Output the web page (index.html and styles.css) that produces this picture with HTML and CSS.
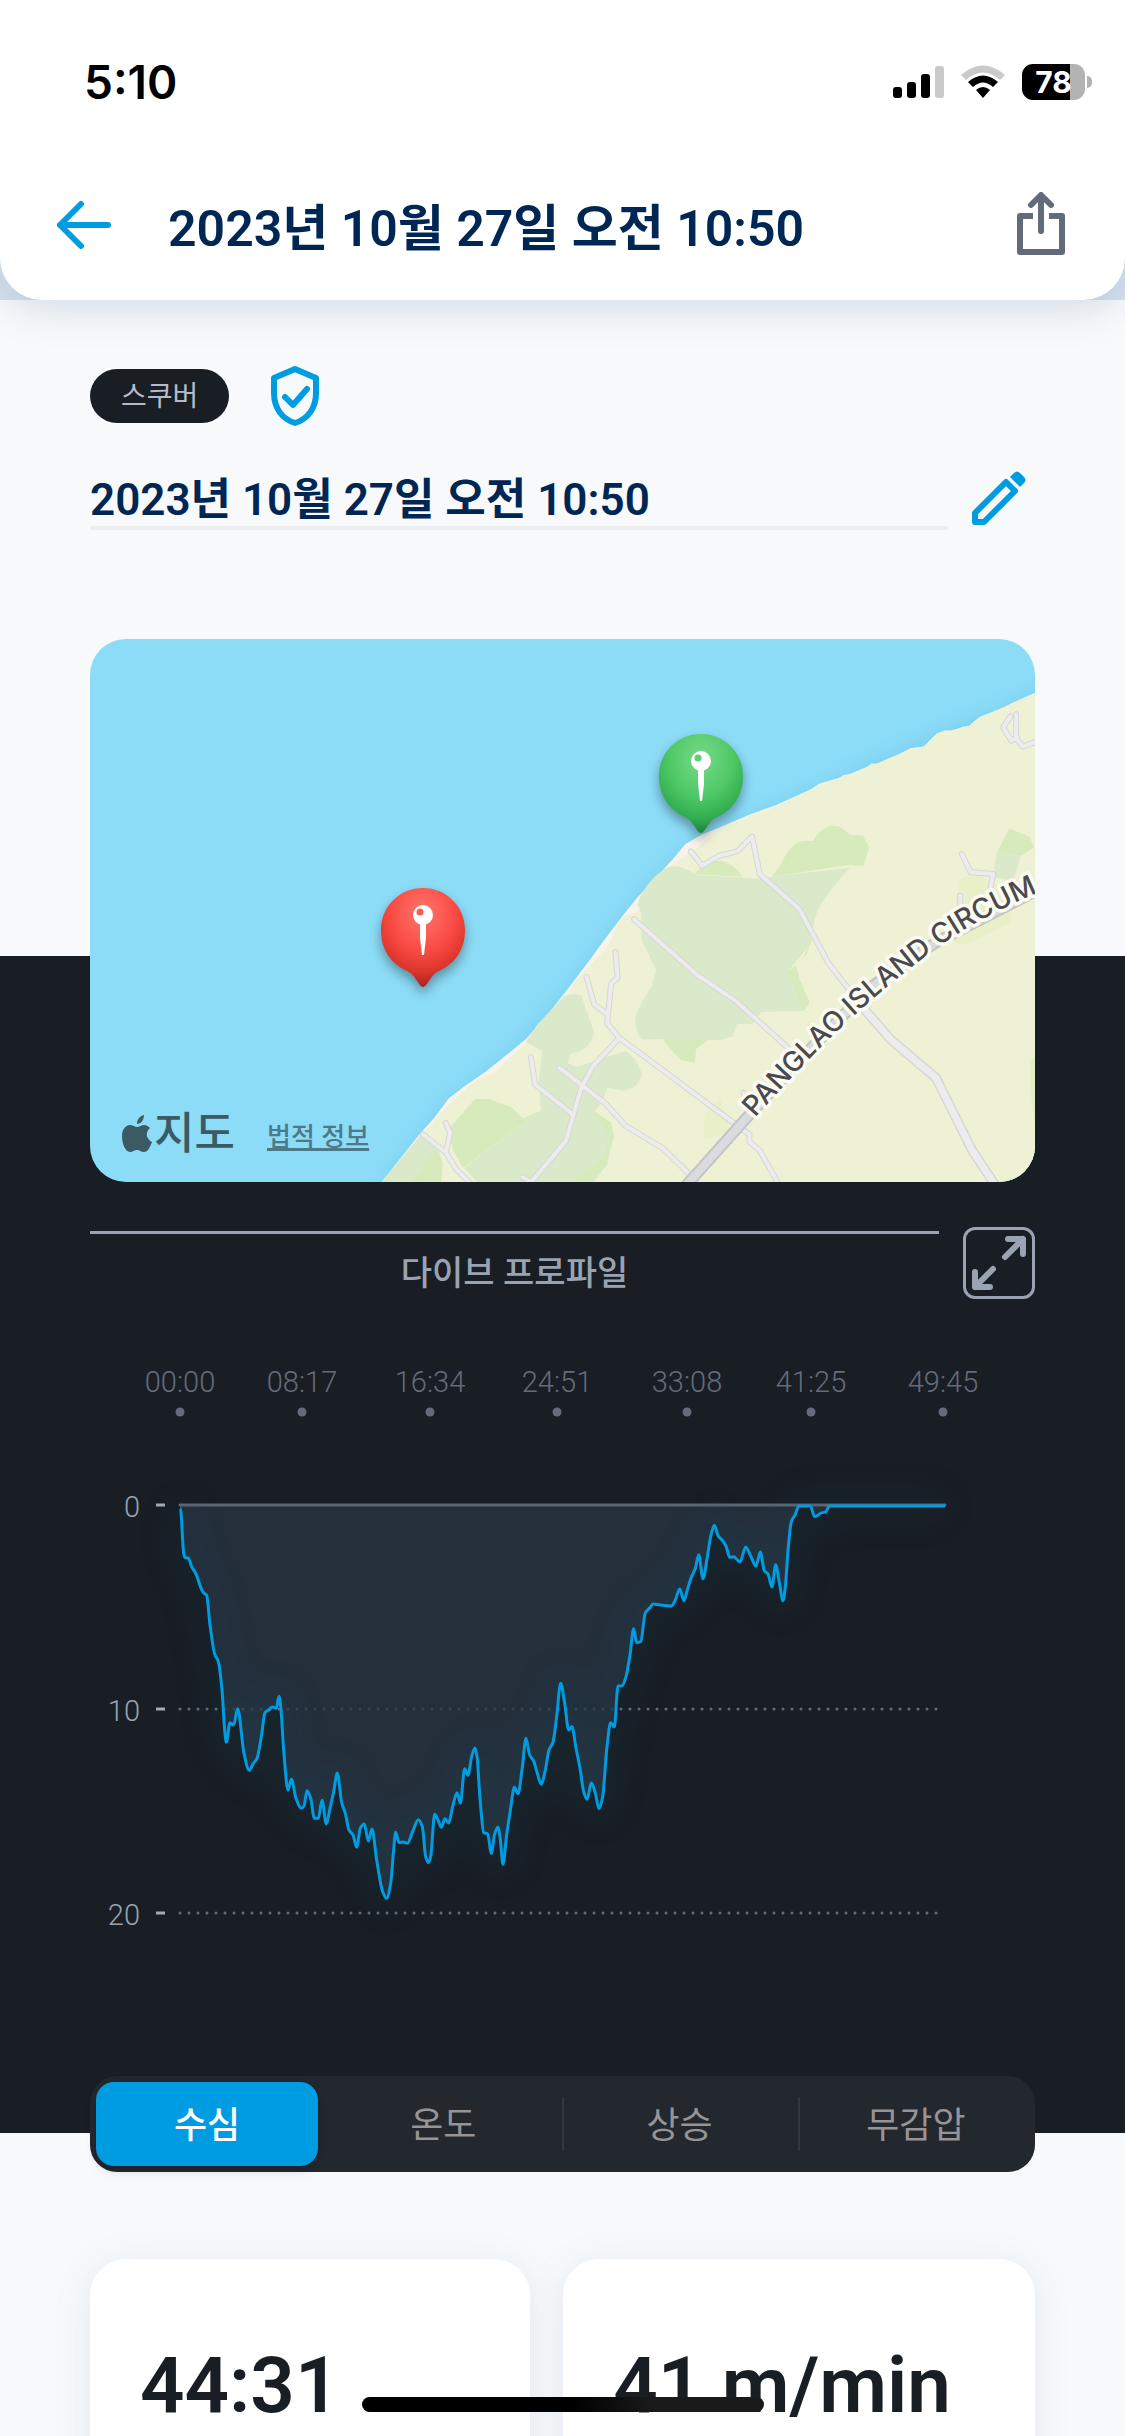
FILE: index.html
```html
<!DOCTYPE html>
<html lang="ko">
<head>
    <meta charset="utf-8">
    <meta name="viewport" content="width=device-width, initial-scale=1">
    <title>다이브 로그</title>
    <link rel="stylesheet" href="styles.css">
</head>
<body>
    <div class="top">
        <header class="header">
            <div class="status-bar">
                <span class="clock">5:10</span>
                <div class="status-icons">
                    <svg width="51" height="34" viewBox="0 0 51 34">
                        <rect x="0" y="22" width="9" height="11" rx="3"/>
                        <rect x="14" y="17" width="9" height="16" rx="3"/>
                        <rect x="28" y="9" width="9" height="24" rx="3"/>
                        <rect x="42" y="1" width="9" height="32" rx="3" fill="#cacaca"/>
                    </svg>
                    <svg width="46" height="34" viewBox="0 0 46 34">
                        <path d="M1 10Q23 -9 45 10L40 15Q23 0 6 15Z" fill="#cacaca"/>
                        <path d="M8 17Q23 4 38 17L33 22Q23 13 13 22Z"/>
                        <path d="M16 25Q23 19 30 25L23 33Z"/>
                    </svg>
                    <div class="battery"><span>78</span></div>
                </div>
            </div>
            <div class="app-bar">
                <button class="icon-btn" aria-label="뒤로">
                    <svg width="54" height="54" viewBox="0 0 54 54" fill="none" stroke="#009ce1" stroke-width="6" stroke-linecap="round" stroke-linejoin="round">
                        <path d="M51 27H3M24 6L3 27l21 21"/>
                    </svg>
                </button>
                <h1>2023년 10월 27일 오전 10:50</h1>
                <button class="icon-btn" aria-label="공유">
                    <svg width="48" height="66" viewBox="0 0 48 66" fill="none" stroke="#616b7a" stroke-width="6" stroke-linejoin="round">
                        <path d="M16 24H3v36h42V24H32"/>
                        <path d="M24 39V6M14 13L24 3l10 10" stroke-linecap="round"/>
                    </svg>
                </button>
            </div>
        </header>
    </div>

    <main>
        <section class="summary">
            <div class="tags">
                <span class="pill">스쿠버</span>
                <svg width="48" height="60" viewBox="0 0 48 60" fill="none" stroke="#009ce1" stroke-width="6" stroke-linejoin="round">
                    <path d="M24 3L45 12V27C45 42 37 53 24 57C11 53 3 42 3 27V12Z"/>
                    <path d="M14 31l8 8 14-16" stroke-linecap="round"/>
                </svg>
            </div>
            <div class="name-row">
                <input class="name-input" type="text" value="2023년 10월 27일 오전 10:50" aria-label="다이브 이름">
                <button class="icon-btn" aria-label="이름 편집">
                    <svg width="54" height="54" viewBox="0 0 54 54">
                        <path d="M3 51V42L34 11L43 20L12 51Z" fill="none" stroke="#009ce1" stroke-width="6" stroke-linejoin="round"/>
                        <path d="M38 6L42 2Q45 -1 48 2L52 6Q55 9 52 12L48 16Z" fill="#009ce1"/>
                    </svg>
                </button>
            </div>

            <div class="map">
                <svg class="map-art" viewBox="0 0 945 543" role="img" aria-label="다이브 위치 지도">
                    <defs>
                        <radialGradient id="green" cx="50%" cy="25%" r="75%">
                            <stop offset="0" stop-color="#78d989"/>
                            <stop offset=".5" stop-color="#4fc966"/>
                            <stop offset=".8" stop-color="#33ae50"/>
                            <stop offset="1" stop-color="#20823a"/>
                        </radialGradient>
                        <radialGradient id="red" cx="50%" cy="25%" r="75%">
                            <stop offset="0" stop-color="#ff756c"/>
                            <stop offset=".5" stop-color="#fa4c45"/>
                            <stop offset=".8" stop-color="#dc352c"/>
                            <stop offset="1" stop-color="#a32620"/>
                        </radialGradient>
                        <filter id="soft" x="-50%" y="-50%" width="200%" height="200%">
                            <feGaussianBlur stdDeviation="6"/>
                        </filter>
                        <filter id="coast" x="-20%" y="-20%" width="140%" height="140%">
                            <feGaussianBlur stdDeviation="22"/>
                        </filter>
                        <path id="road-label" d="M665 479Q715 422 756 384T844 311Q898 271 990 237"/>
                        <path id="marker" d="M0 -42C24 -42 42 -23 42 0C42 22 30 35 14 42C7 46 4 57 0 57S-7 46 -14 42C-30 35 -42 22 -42 0C-42 -23 -24 -42 0 -42Z"/>
                    </defs>
                    <rect width="945" height="543" fill="#8cdcf8"/>
                    <g transform="translate(270 1) scale(.43367 .35714)">
                        <path d="M1600 120L1500 178L1330 262L1100 385L900 490L750 572L610 760L490 960L345 1155L205 1285L50 1518L1600 1600Z" fill="#62bfe0" opacity=".4" filter="url(#coast)"/>
                        <path d="M1560 146L1505 176L1482 190L1430 215L1405 240L1365 253L1330 262L1300 298L1270 303L1235 324L1195 345L1160 360L1130 375L1100 388L1060 402L1040 418L960 462L900 488L820 530L786 546L750 572L720 615L665 688L640 720L610 765L560 845L530 895L490 960L435 1045L382 1118L345 1155L290 1208L240 1250L205 1283L170 1340L140 1380L95 1448L50 1518H1580V146Z" fill="#f7f3ea"/>
                        <path d="M1560 147L1505 177L1482 190L1457 203L1430 216L1418 226L1405 241L1390 243L1365 254L1350 253L1330 262L1316 282L1300 299L1285 301L1270 303L1255 315L1235 324L1215 333L1195 346L1180 346L1160 362L1145 372L1115 378L1100 390L1085 394L1050 414L960 466L900 492L820 536L775 585L740 612L690 660L640 760L605 775L570 860L500 950L470 1010L382 1128L315 1208L265 1236L205 1300L150 1375L50 1518H1580V147Z" fill="#eef1d4"/>
                        <path d="M950 663L972 625C985 590 1000 567 1025 563L1045 563C1060 530 1080 515 1105 522L1130 545L1160 548L1174 580L1161 632L1125 630Z" fill="#d6eabb"/>
                        <path d="M770 655L800 622Q850 605 882 663Z" fill="#d6eabb"/>
                        <path d="M640 740C650 700 680 650 715 634Q745 630 775 658L910 668L1130 638Q1050 740 1046 800L1040 850L985 930L1025 1038L925 1042L905 1075L870 1075L860 1110L830 1120L700 1118L650 1118C635 1100 630 1060 640 1040C655 1000 670 980 675 960L683 925L650 840L648 765Z" fill="#dae9ca"/>
                        <path d="M1042 835L1020 895L985 930L1000 970L1022 1038Q1040 1020 1034 1005L1015 955L1005 912L1030 880Z" fill="#d6eabb"/>
                        <path d="M705 1130L700 1118H805L775 1145L772 1185L740 1175Z" fill="#d6eabb"/>
                        <path d="M382 1125L410 1075L470 998Q490 988 510 995L540 1100Q530 1140 510 1150L485 1160L478 1185L500 1195L610 1152Q635 1160 650 1215Q640 1260 605 1262L570 1252L560 1290L540 1320L570 1360L585 1390L570 1465L540 1518H270L240 1478L395 1335L417 1318L412 1240L420 1150Z" fill="#dae9ca"/>
                        <path d="M205 1370L265 1285H297L350 1308L375 1340L417 1318L395 1335L238 1478L215 1430Z" fill="#d6eabb"/>
                        <path d="M540 1320L578 1350L586 1390L570 1440V1470L530 1518H490L560 1450L578 1395Z" fill="#d6eabb"/>
                        <path d="M50 1518L140 1385L182 1430L190 1465L185 1518Z" fill="#dae9ca"/>
                        <path d="M120 1518L175 1425L191 1465L187 1518Z" fill="#d6eabb"/>
                        <path d="M1468 595L1498 528L1543 550L1554 580L1524 604Z" fill="#d6eabb"/>
                        <path d="M1468 595L1524 604L1506 675L1460 665Z" fill="#dae9ca"/>
                        <path d="M1375 720L1385 670Q1420 640 1450 675L1500 700V790L1400 850Q1350 860 1370 800Z" fill="#e9f0c8"/>
                        <path d="M790 1370L800 1320L830 1285L850 1345L850 1380L800 1395Z" fill="#e9f0c8"/>
                        <path d="M1545 1180L1560 1160V1400L1545 1250Z" fill="#e4edc6"/>
                        <g fill="none" stroke-linejoin="round" stroke-linecap="round">
                            <g class="road-edge">
                                <path id="lanes" d="M763 592L789 632L828 604L870 592L904 550L922 656L1013 753L1080 905L1135 990M632 782L778 938L868 1012L990 1145M589 874L594 945L579 963L570 1073L598 1114L868 1358L898 1384V1405L922 1430L963 1518M522 943L540 1020L570 1048M598 1114L537 1194L510 1255L492 1330L475 1402L395 1518M460 1198L510 1245L566 1298L612 1360L698 1423L765 1502M394 1168L404 1245L492 1330M375 1504L395 1518M145 1384L198 1435L222 1482L252 1518M198 1353L208 1380L198 1435M1388 600L1408 650L1460 655L1450 720M1384 716V770M1513 208V275L1528 298L1558 286M1500 214L1483 245L1502 282L1515 272M884 1268L895 1300"/>
                            </g>
                            <use href="#lanes" class="road"/>
                            <path class="road-edge wide" d="M1135 990L1160 1030L1225 1120L1328 1226L1412 1430L1464 1525"/>
                            <path class="road wide" d="M1135 990L1160 1030L1225 1120L1328 1226L1412 1430L1464 1525"/>
                            <path class="highway-edge" d="M750 1530L890 1340L1050 1130L1180 970L1330 845L1580 690"/>
                            <path class="highway" d="M750 1530L890 1340L1050 1130L1180 970L1330 845L1580 690"/>
                        </g>
                    </g>
                    <text class="road-name"><textPath href="#road-label">PANGLAO ISLAND CIRCUM</textPath></text>
                    <g transform="translate(611 137)">
                        <use href="#marker" y="6" opacity=".35" filter="url(#soft)"/>
                        <use href="#marker" fill="url(#green)"/>
                        <circle cy="-15" r="10" fill="#fff"/>
                        <circle cx="-3" cy="-18" r="3.5" fill="#5cce70"/>
                        <path d="M-3 -7H3V8L1 25H-1L-3 8Z" fill="#fff"/>
                    </g>
                    <g transform="translate(333 291)">
                        <use href="#marker" y="6" opacity=".35" filter="url(#soft)"/>
                        <use href="#marker" fill="url(#red)"/>
                        <circle cy="-15" r="10" fill="#fff"/>
                        <circle cx="-3" cy="-18" r="3.5" fill="#fc5a52"/>
                        <path d="M-3 -7H3V8L1 25H-1L-3 8Z" fill="#fff"/>
                    </g>
                </svg>
                <div class="map-credit">
                    <svg width="30" height="38" viewBox="0 0 30 38" fill="#3b5a64">
                        <path d="M22 0C22 5 19 9 15 9C15 4 18 1 22 0Z"/>
                        <path d="M15 12C18 12 19 10 22 10C25 10 27 12 28 13C23 17 24 24 30 27C28 32 26 37 22 37C19 37 18 35 15 35C12 35 11 37 8 37C3 37 0 28 0 21C0 14 4 10 8 10C11 10 13 12 15 12Z"/>
                    </svg>
                    <span class="map-brand">지도</span>
                    <a href="#">법적 정보</a>
                </div>
            </div>
        </section>

        <section class="profile">
            <div class="profile-head">
                <h2>다이브 프로파일</h2>
                <button class="expand-btn" aria-label="전체 화면">
                    <svg width="66" height="66" viewBox="3 3 66 66" fill="none" stroke="#99a3b1" stroke-width="6" stroke-linecap="round" stroke-linejoin="round">
                        <path d="M45 12H60V27M60 12L42 30M12 45V60H27M12 60L30 42"/>
                    </svg>
                </button>
            </div>
            <svg class="chart" viewBox="0 0 945 620" role="img" aria-label="수심 그래프">
                <defs>
                    <filter id="glow" x="-20%" y="-20%" width="140%" height="140%">
                        <feGaussianBlur stdDeviation="18"/>
                    </filter>
                </defs>
                <g class="time-labels">
                    <text x="90" y="52">00:00</text>
                    <text x="212" y="52">08:17</text>
                    <text x="340" y="52">16:34</text>
                    <text x="467" y="52">24:51</text>
                    <text x="597" y="52">33:08</text>
                    <text x="721" y="52">41:25</text>
                    <text x="853" y="52">49:45</text>
                </g>
                <g fill="#646c7b">
                    <circle cx="90" cy="72" r="4.5"/>
                    <circle cx="212" cy="72" r="4.5"/>
                    <circle cx="340" cy="72" r="4.5"/>
                    <circle cx="467" cy="72" r="4.5"/>
                    <circle cx="597" cy="72" r="4.5"/>
                    <circle cx="721" cy="72" r="4.5"/>
                    <circle cx="853" cy="72" r="4.5"/>
                </g>
                <g class="depth-labels">
                    <text x="50" y="177">0</text>
                    <text x="50" y="381">10</text>
                    <text x="50" y="585">20</text>
                </g>
                <path d="M66 165h9M66 369h9M66 573h9" stroke="#a3abb8" stroke-width="3"/>
                <path d="M90 369H850M90 573H850" class="grid-line"/>
                <path id="area" fill="#293443" fill-opacity=".75"/>
                <path d="M90 165H855" stroke="#5d6675" stroke-width="3" stroke-linecap="round"/>
                <path id="line-glow" class="line-glow" filter="url(#glow)"/>
                <path id="line" class="line"/>
            </svg>
        </section>

        <div class="tabs" role="tablist">
            <button class="tab active" role="tab" aria-selected="true">수심</button>
            <button class="tab" role="tab" aria-selected="false">온도</button>
            <button class="tab" role="tab" aria-selected="false">상승</button>
            <button class="tab" role="tab" aria-selected="false">무감압</button>
        </div>

        <div class="cards">
            <div class="card">44:31</div>
            <div class="card">41 m/min</div>
        </div>
    </main>
    <div class="home-indicator"></div>

    <script src="profile.js"></script>
</body>
</html>
```
FILE: profile.js
```js
// Depth samples: [time, depth], three units per chart pixel
const samples = [
    [31,54],[41,190],[45,203],[54,203],[65,230],[78,252],[97,303],[103,310],[110,316],[120,405],[134,492],[145,515],
    [156,600],[164,720],[169,757],[180,698],[191,705],[203,656],[222,790],[238,841],[249,822],[261,805],[274,740],
    [285,668],[296,660],[307,651],[319,655],[327,619],[333,660],[341,780],[354,900],[364,867],[378,925],[394,955],
    [402,948],[411,902],[422,925],[433,985],[445,985],[456,931],[469,1002],[480,955],[491,905],[502,849],[515,938],
    [526,970],[537,1020],[549,1035],[560,1072],[571,1015],[583,1002],[595,1053],[606,1017],[620,1110],[638,1205],
    [650,1225],[662,1180],[670,1090],[677,1027],[687,1058],[700,1056],[712,1060],[728,1025],[745,989],[757,1010],
    [767,1100],[775,1118],[782,1100],[794,973],[804,990],[814,1012],[825,986],[836,999],[848,950],[861,908],[871,940],
    [884,836],[894,856],[905,800],[915,774],[921,800],[930,925],[941,1028],[953,1032],[964,1090],[974,1032],[984,1011],
    [990,1040],[999,1123],[1010,1035],[1022,955],[1033,892],[1044,911],[1056,840],[1068,745],[1079,795],[1091,813],
    [1102,850],[1114,883],[1126,840],[1137,780],[1149,757],[1160,680],[1172,580],[1184,640],[1196,720],[1206,710],
    [1218,775],[1230,835],[1241,905],[1251,928],[1264,879],[1276,910],[1287,956],[1298,920],[1310,780],[1322,698],
    [1333,711],[1344,588],[1356,588],[1368,560],[1380,495],[1391,416],[1400,458],[1412,455],[1426,368],[1438,355],
    [1450,342],[1470,345],[1504,348],[1516,330],[1529,297],[1542,332],[1552,300],[1564,262],[1576,235],[1586,194],
    [1599,266],[1612,200],[1622,140],[1633,106],[1644,137],[1656,150],[1668,168],[1679,202],[1691,200],[1710,216],
    [1727,171],[1742,198],[1758,228],[1771,186],[1783,242],[1794,252],[1806,291],[1817,224],[1828,278],[1839,332],
    [1845,300],[1855,170],[1864,95],[1875,75],[1887,48],[1921,48],[1934,80],[1956,68],[1967,66],[1978,48],[2325,48]
];

const points = samples.map(([x, y]) => [80 + x / 3, 150 + y / 3]);

// Slope at a point, flat on every peak and valley
function slope(i) {
    if (i === 0 || i === points.length - 1) return 0;
    const before = (points[i][1] - points[i - 1][1]) / (points[i][0] - points[i - 1][0]);
    const after = (points[i + 1][1] - points[i][1]) / (points[i + 1][0] - points[i][0]);
    return before * after <= 0 ? 0 : 2 * before * after / (before + after);
}

let d = `M${points[0]}`;
for (let i = 1; i < points.length; i++) {
    const [x0, y0] = points[i - 1];
    const [x1, y1] = points[i];
    const step = (x1 - x0) / 3;
    d += `C${x0 + step},${y0 + step * slope(i - 1)} ${x1 - step},${y1 - step * slope(i)} ${x1},${y1}`;
}

document.getElementById('line').setAttribute('d', d);
document.getElementById('line-glow').setAttribute('d', d);
document.getElementById('area').setAttribute('d', `${d}V165H90Z`);
```
FILE: styles.css
```css
* {
    box-sizing: border-box;
}
body {
    margin: 0;
    height: 100vh;
    overflow: hidden;
    background-color: #f8f9fb;
    color: #191d24;
    font-family: Roboto, "Noto Sans CJK KR", sans-serif;
}
svg {
    display: block;
    flex-shrink: 0;
}
button {
    border: none;
    padding: 0;
    background: none;
    font-family: inherit;
    cursor: pointer;
}

/* header */
.top {
    background-color: #d6e0ed;
}
.header {
    background-color: #fff;
    border-radius: 0 0 42px 42px;
    box-shadow: 0 12px 36px rgba(90, 130, 170, 0.2);
}
.status-bar {
    display: flex;
    justify-content: space-between;
    align-items: center;
    padding: 49px 34px 0 84px;
    height: 115px;
    font-family: Inter, sans-serif;
    color: #000;
}
.clock {
    font-size: 46px;
    font-weight: 600;
}
.status-icons {
    display: flex;
    align-items: center;
    gap: 16px;
}
.battery {
    position: relative;
    width: 63px;
    height: 36px;
    margin-right: 6px;
    border-radius: 11px;
    background: linear-gradient(to right, #000 76%, #b3b3b3 76%);
    color: #fff;
    font-size: 30px;
    font-weight: 700;
    line-height: 36px;
    text-align: center;
}
.battery::after {
    content: "";
    position: absolute;
    right: -7px;
    top: 12px;
    width: 5px;
    height: 12px;
    border-radius: 0 5px 5px 0;
    background-color: #b3b3b3;
}
.app-bar {
    display: flex;
    align-items: center;
    padding: 77px 60px 42px 57px;
}
.app-bar h1 {
    flex: 1;
    margin: 0 0 0 57px;
    padding-top: 8px;
    color: #002654;
    font-size: 50px;
    font-weight: 600;
    line-height: 58px;
}

/* summary */
.summary {
    padding: 66px 90px 0;
}
.tags {
    display: flex;
    align-items: center;
    gap: 42px;
}
.pill {
    padding: 2px 31px 0;
    border-radius: 27px;
    background-color: #191d24;
    color: #b4bccb;
    font-size: 28px;
    line-height: 52px;
}
.name-row {
    display: flex;
    align-items: center;
    gap: 24px;
    margin-top: 40px;
}
.name-input {
    flex: 1;
    min-width: 0;
    height: 64px;
    padding: 0;
    border: none;
    border-bottom: 4px solid #ebedee;
    border-radius: 0;
    background: none;
    color: #002654;
    font-family: inherit;
    font-size: 44px;
    font-weight: 600;
}
.name-row .icon-btn {
    margin-right: 9px;
}
.map {
    position: relative;
    z-index: 1;
    margin-top: 109px;
    border-radius: 36px;
    overflow: hidden;
}
.map-art {
    width: 100%;
}
.road-edge, .road, .highway-edge, .highway, .road-edge path {
    vector-effect: non-scaling-stroke;
}
.road-edge {
    stroke: #d5d8d2;
    stroke-width: 6px;
}
.road {
    stroke: #ececee;
    stroke-width: 4px;
}
.road-edge.wide {
    stroke-width: 10px;
}
.road.wide {
    stroke-width: 7px;
}
.highway-edge {
    stroke: #c3c4c6;
    stroke-width: 12px;
}
.highway {
    stroke: #dadbdf;
    stroke-width: 8px;
}
.road-name {
    fill: #4a4a4c;
    stroke: #fbfbf4;
    stroke-width: 7px;
    stroke-linejoin: round;
    paint-order: stroke;
    font-family: Inter, sans-serif;
    font-size: 28px;
    font-weight: 500;
}
.map-credit {
    position: absolute;
    left: 32px;
    bottom: 18px;
    display: flex;
    align-items: center;
    color: #3b5a64;
}
.map-brand {
    margin-left: 2px;
    font-size: 44px;
    font-weight: 500;
    line-height: 60px;
}
.map-credit a {
    margin-left: 32px;
    color: #4d7a88;
    font-size: 26px;
    font-weight: 500;
    text-decoration-thickness: 3px;
}

/* dive profile, the dark area starts behind the map */
.profile {
    margin-top: -226px;
    padding: 271px 90px 173px;
    background-color: #191d24;
}
.profile-head {
    display: flex;
    gap: 24px;
}
.profile-head h2 {
    flex: 1;
    margin: 4px 0 0;
    border-top: 3px solid #99a3b1;
    color: #99a3b1;
    font-size: 34px;
    font-weight: 500;
    line-height: 78px;
    height: 68px;
    text-align: center;
}
.expand-btn {
    width: 72px;
    height: 72px;
    border: 3px solid #99a3b1;
    border-radius: 12px;
}
.chart {
    width: 100%;
    margin-top: 41px;
}
.time-labels {
    fill: #646c7b;
    font-size: 29px;
    font-weight: 300;
    text-anchor: middle;
}
.depth-labels {
    fill: #99a3b1;
    font-size: 29px;
    font-weight: 300;
    text-anchor: end;
}
.grid-line {
    stroke: #646c7b;
    stroke-width: 3px;
    stroke-linecap: round;
    stroke-dasharray: 0 9;
}
.line {
    fill: none;
    stroke: #009ce1;
    stroke-width: 3px;
    stroke-linejoin: round;
}
.line-glow {
    fill: none;
    stroke: #0c5f70;
    stroke-width: 20px;
    opacity: 0.14;
}

/* tabs */
.tabs {
    position: relative;
    display: grid;
    grid-template-columns: repeat(4, 1fr);
    margin: -57px 90px 0;
    border-radius: 27px;
    background-color: #23272e;
}
.tab {
    position: relative;
    height: 84px;
    margin: 6px 8px 6px 6px;
    padding-bottom: 5px;
    color: #969494;
    font-size: 36px;
}
.tab.active {
    border-radius: 18px;
    background-color: #009ce1;
    box-shadow: 0 4px 12px rgba(0, 0, 0, 0.15);
    color: #fff;
    font-weight: 500;
}
.tab + .tab + .tab::before {
    content: "";
    position: absolute;
    left: -7px;
    top: 15px;
    width: 2px;
    height: 54px;
    background-color: #33383f;
}

/* cards */
.cards {
    display: grid;
    grid-template-columns: 14fr 15fr;
    gap: 33px;
    margin: 87px 90px 0;
}
.card {
    height: 300px;
    padding: 78px 50px;
    border-radius: 36px;
    background-color: #fff;
    box-shadow: 0 6px 36px rgba(90, 140, 180, 0.14);
    font-size: 78px;
    font-weight: 600;
    line-height: 98px;
    white-space: nowrap;
}
.home-indicator {
    position: fixed;
    left: 50%;
    bottom: 24px;
    width: 402px;
    height: 15px;
    margin-left: -201px;
    border-radius: 8px;
    background: linear-gradient(to right, #000 52%, #1a1a1a 72%);
}
```
